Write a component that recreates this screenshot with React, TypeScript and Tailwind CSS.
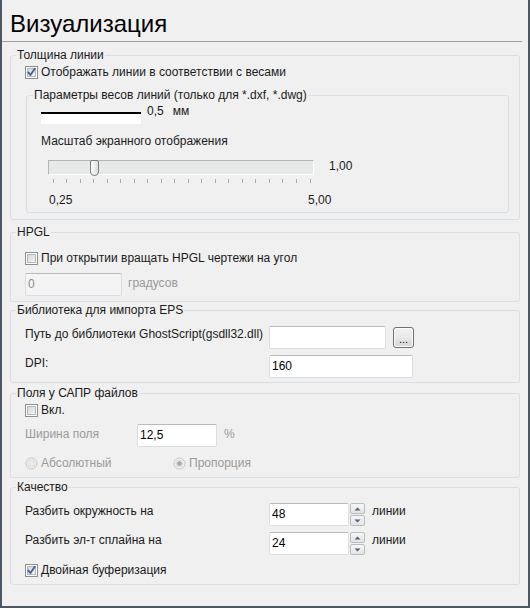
import React from "react";

const Check = ({ checked = false }: { checked?: boolean }) => (
  <svg width="13" height="13" viewBox="0 0 13 13" className="shrink-0">
    <defs>
      <linearGradient id="cbg" x1="0" y1="0" x2="1" y2="1">
        <stop offset="0" stopColor="#d2d4d8" />
        <stop offset="1" stopColor="#f7f7f7" />
      </linearGradient>
    </defs>
    <rect x="0.5" y="0.5" width="12" height="12" fill="#fff" stroke="#8e8f8f" />
    <rect x="2.5" y="2.5" width="8" height="8" fill="url(#cbg)" stroke="#b4b8bd" />
    {checked && (
      <path d="M3.2 6.4 L5.4 9 L9.8 2.8" fill="none" stroke="#4a5f97" strokeWidth="1.9" strokeLinecap="round" strokeLinejoin="round" />
    )}
  </svg>
);

const Radio = ({ selected = false }: { selected?: boolean }) => (
  <svg width="13" height="13" viewBox="0 0 13 13" className="shrink-0">
    <circle cx="6.5" cy="6.5" r="5.5" fill="#f4f4f4" stroke="#c2c4c6" />
    <circle cx="6.5" cy="6.5" r="3.5" fill="#ebebeb" stroke="#dadada" />
    {selected && <circle cx="6.5" cy="6.5" r="2.3" fill="#a3a3a3" />}
  </svg>
);

const Input = ({ value = "", w, disabled = false }: { value?: string; w: string; disabled?: boolean }) => (
  <div
    className={`${w} h-[23px] border border-[#dadde2] border-t-[#b7bac0] rounded-[2px] px-[2px] leading-[21px] ${
      disabled ? "bg-[#f4f4f4] text-[#8c8c8c]" : "bg-white text-black"
    }`}
  >
    {value}
  </div>
);

const SpinBtn = ({ up }: { up?: boolean }) => (
  <div className="w-[15px] h-[11px] border border-[#b9bcc0] rounded-[2px] bg-gradient-to-b from-[#f7f7f7] to-[#e3e3e3] flex items-center justify-center">
    <svg width="7" height="4" viewBox="0 0 7 4">
      {up ? <path d="M0.5 3.5 L3.5 0.5 L6.5 3.5 Z" fill="#4d6185" /> : <path d="M0.5 0.5 L3.5 3.5 L6.5 0.5 Z" fill="#4d6185" />}
    </svg>
  </div>
);

const Spinner = ({ value }: { value: string }) => (
  <div className="flex items-start">
    <Input value={value} w="w-[80px]" />
    <div className="ml-[1px] flex flex-col gap-[1px] pt-[0px]">
      <SpinBtn up />
      <SpinBtn />
    </div>
    <span className="ml-[7px] mt-[1px]">линии</span>
  </div>
);

const Group = ({ title, className, children }: { title: string; className: string; children: React.ReactNode }) => (
  <fieldset className={`mx-[8px] border border-[#d5dfe5] rounded-[3px] p-0 ${className}`}>
    <legend className="ml-[5px] px-[1px] leading-[14px]">{title}</legend>
    {children}
  </fieldset>
);

export default function App() {
  const ticks = Array.from({ length: 20 }, (_, i) => 4.5 + i * (257 / 19));
  return (
    <div className="w-[530px] h-[608px] bg-[#f0f0f0] border-x-2 border-b-2 border-[#4d5763] font-['Liberation_Sans',sans-serif] text-[12px] leading-[14px] text-[#1a1a1a] overflow-hidden">
      <div className="h-[41px] pl-[8px] pt-[10px] text-[24px] leading-[28px] text-black">Визуализация</div>
      <div className="h-px bg-[#a0a0a0] mr-[6px]" />

      <Group title="Толщина линии" className="mt-[6px] h-[172px]">
        <label className="mt-[3px] pl-[14px] flex items-center gap-[3px]">
          <Check checked />
          <span>Отображать линии в соответствии с весами</span>
        </label>
        <fieldset className="mt-[9px] ml-[15px] mr-[10px] h-[125px] border border-[#d5dfe5] rounded-[3px] p-0">
          <legend className="ml-[6px] px-[1px] leading-[14px]">Параметры весов линий (только для *.dxf, *.dwg)</legend>
          <div className="pl-[14px]">
            <div className="mt-[2px] flex items-start">
              <div className="mt-[8px] w-[100px] h-[12px] bg-white border-t-2 border-black" />
              <span className="ml-[6px]">0,5</span>
              <span className="ml-[9px]">мм</span>
            </div>
            <div className="mt-[10px]">Масштаб экранного отображения</div>
            <div className="mt-[12px] ml-[7px] flex items-start">
              <div className="relative w-[266px] h-[15px] bg-[#e7e9e9] border border-[#b4b4b4] border-b-white border-r-white">
                <svg width="11" height="17" viewBox="0 0 11 17" className="absolute left-[40px] top-[-1px]">
                  <defs>
                    <linearGradient id="thumb" x1="0" y1="0" x2="1" y2="0">
                      <stop offset="0" stopColor="#ffffff" />
                      <stop offset="1" stopColor="#dcdcdc" />
                    </linearGradient>
                  </defs>
                  <path d="M1.5 2 Q1.5 0.5 3 0.5 L8 0.5 Q9.5 0.5 9.5 2 L9.5 12 Q9.5 15.5 5.5 15.5 Q1.5 15.5 1.5 12 Z" fill="url(#thumb)" stroke="#7d7d7d" />
                </svg>
              </div>
              <span className="ml-[15px] mt-[-1px]">1,00</span>
            </div>
            <svg width="268" height="5" className="mt-[4px] ml-[7px] block">
              {ticks.map((x, i) => (
                <line key={i} x1={Math.round(x) + 0.5} y1="0" x2={Math.round(x) + 0.5} y2="4" stroke="#a9a9a9" />
              ))}
            </svg>
            <div className="mt-[9px] ml-[8px] flex">
              <span className="w-[259px]">0,25</span>
              <span>5,00</span>
            </div>
          </div>
        </fieldset>
      </Group>

      <Group title="HPGL" className="mt-[5px] h-[77px]">
        <label className="mt-[12px] pl-[14px] flex items-center gap-[3px]">
          <Check />
          <span>При открытии вращать HPGL чертежи на угол</span>
        </label>
        <div className="mt-[8px] pl-[14px] flex items-start">
          <Input value="0" w="w-[97px]" disabled />
          <span className="ml-[6px] mt-[3px] text-[#9a9a9a]">градусов</span>
        </div>
      </Group>

      <Group title="Библиотека для импорта EPS" className="mt-[1px] h-[80px]">
        <div className="mt-[9px] pl-[14px] flex items-start">
          <span className="w-[244px] mt-[1px]">Путь до библиотеки GhostScript(gsdll32.dll)</span>
          <Input w="w-[117px]" />
          <button className="ml-[7px] mt-[1px] w-[21px] h-[21px] border border-[#707070] rounded-[3px] bg-gradient-to-b from-[#f3f3f3] via-[#e8e8e8] to-[#d6d6d6] text-[11px] leading-[14px] pt-[2px] text-black shadow-[inset_0_0_0_1px_#fcfcfc]">
            ...
          </button>
        </div>
        <div className="mt-[6px] pl-[14px] flex items-start">
          <span className="w-[244px] mt-[1px]">DPI:</span>
          <Input value="160" w="w-[144px]" />
        </div>
      </Group>

      <Group title="Поля у САПР файлов" className="mt-[3px] h-[92px]">
        <label className="mt-[3px] pl-[14px] flex items-center gap-[3px]">
          <Check />
          <span>Вкл.</span>
        </label>
        <div className="mt-[7px] pl-[14px] flex items-start">
          <span className="w-[112px] mt-[3px] text-[#9a9a9a]">Ширина поля</span>
          <Input value="12,5" w="w-[80px]" />
          <span className="ml-[7px] mt-[3px] text-[#9a9a9a]">%</span>
        </div>
        <div className="mt-[9px] pl-[14px] flex items-center text-[#9a9a9a]">
          <div className="w-[148px] flex items-center gap-[3px]">
            <Radio />
            <span>Абсолютный</span>
          </div>
          <div className="flex items-center gap-[3px]">
            <Radio selected />
            <span>Пропорция</span>
          </div>
        </div>
      </Group>

      <Group title="Качество" className="mt-[2px] h-[105px]">
        <div className="mt-[9px] pl-[14px] flex items-start">
          <span className="w-[244px] mt-[1px]">Разбить окружность на</span>
          <Spinner value="48" />
        </div>
        <div className="mt-[6px] pl-[14px] flex items-start">
          <span className="w-[244px] mt-[1px]">Разбить эл-т сплайна на</span>
          <Spinner value="24" />
        </div>
        <label className="mt-[8px] pl-[14px] flex items-center gap-[3px]">
          <Check checked />
          <span>Двойная буферизация</span>
        </label>
      </Group>
    </div>
  );
}
